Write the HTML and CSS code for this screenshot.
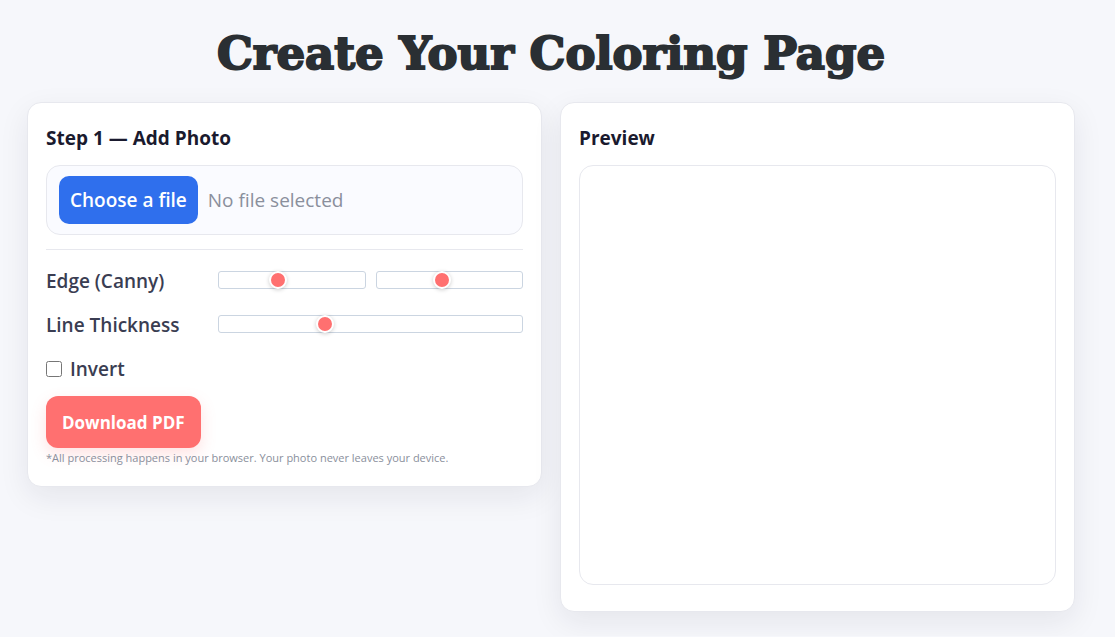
FILE: index.html
```html
<!DOCTYPE html>
<html lang="en">
<head>
  <meta charset="UTF-8" />
  <meta name="viewport" content="width=device-width, initial-scale=1.0"/>
  <title>Create Your Coloring Page</title>
  <link rel="stylesheet" href="styles.css">
</head>
<body>

<main class="page">
  <h1 class="page-title">Create Your Coloring Page</h1>

  <div class="grid">
    <section class="card">
      <h2 class="card-title">Step 1 — Add Photo</h2>

      <div class="file-row">
        <input type="file" id="fileInput" accept="image/*" aria-label="Choose a file" hidden />
        <button type="button" class="btn-file" id="fileBtn">Choose a file</button>
        <span class="file-name" id="fileName">No file selected</span>
      </div>

      <hr class="divider">

      <div class="control">
        <label for="cannyLow">Edge (Canny)</label>
        <div class="sliders">
          <input type="range" id="cannyLow" min="0" max="255" value="100" />
          <input type="range" id="cannyHigh" min="0" max="450" value="200" aria-label="Edge high threshold" />
        </div>
      </div>

      <div class="control">
        <label for="thickness">Line Thickness</label>
        <div class="sliders">
          <input type="range" id="thickness" min="0" max="100" value="34" />
        </div>
      </div>

      <label class="check" for="invert">
        <input type="checkbox" id="invert" />
        Invert
      </label>

      <button type="button" class="btn-download">Download PDF</button>
      <p class="note">*All processing happens in your browser. Your photo never leaves your device.</p>
    </section>

    <section class="card">
      <h2 class="card-title">Preview</h2>
      <div class="preview" id="preview"></div>
    </section>
  </div>
</main>

<script>
  const fileInput = document.getElementById('fileInput');
  const fileName = document.getElementById('fileName');

  document.getElementById('fileBtn').addEventListener('click', () => fileInput.click());

  fileInput.addEventListener('change', () => {
    const file = fileInput.files[0];
    fileName.textContent = file ? file.name : 'No file selected';
  });
</script>

</body>
</html>
```
FILE: styles.css
```css
* {
  box-sizing: border-box;
}

body {
  margin: 0;
  background: #f6f7fb;
  color: #1a1a2e;
  font-family: "Segoe UI", "Open Sans", "Noto Sans", sans-serif;
  font-size: 19px;
  line-height: 28px;
}

.page {
  padding: 24px 40px 24px 27px;
}

.page-title {
  margin: 0 0 18px;
  color: #2a2f33;
  font-family: "DejaVu Serif", serif;
  font-size: 45px;
  font-weight: 900;
  line-height: 60px;
  text-align: center;
  -webkit-text-stroke: 2px #2a2f33;
}

.grid {
  display: grid;
  grid-template-columns: 1fr 1fr;
  gap: 18px;
  align-items: start;
}

.card {
  background: #fff;
  border: 1px solid #e7e8ee;
  border-radius: 14px;
  padding: 18px;
  box-shadow: 0 10px 30px rgba(20, 20, 50, 0.08);
}

.card-title {
  margin: 3px 0 13px;
  font-size: 19px;
  font-weight: 700;
  line-height: 28px;
}

.file-row {
  display: flex;
  align-items: center;
  gap: 10px;
  height: 70px;
  padding: 0 12px;
  background: #fafbff;
  border: 1px solid #e7e8ee;
  border-radius: 14px;
}

.btn-file {
  height: 48px;
  padding: 0 11px;
  background: #2f6fed;
  border: none;
  border-radius: 10px;
  color: #fff;
  font-family: inherit;
  font-size: 19px;
  font-weight: 600;
  cursor: pointer;
}

.file-name {
  color: #8a8f9c;
}

.divider {
  margin: 14px 0 17px;
  border: none;
  border-top: 1px solid #e7e8ee;
}

.control {
  display: grid;
  grid-template-columns: 160px 1fr;
  gap: 12px;
  align-items: center;
  height: 28px;
  margin-bottom: 16px;
  color: #3a3d52;
  font-weight: 600;
}

.sliders {
  display: flex;
  gap: 10px;
  padding-bottom: 2px;
}

input[type="range"] {
  -webkit-appearance: none;
  appearance: none;
  flex: 1;
  min-width: 0;
  height: 18px;
  margin: 0;
  background: #fff;
  border: 1px solid #cbd5e1;
  border-radius: 3px;
}

input[type="range"]::-webkit-slider-thumb {
  -webkit-appearance: none;
  width: 18px;
  height: 18px;
  background: #ff7070;
  border: 2px solid #fff;
  border-radius: 50%;
  box-shadow: 0 1px 4px rgba(0, 0, 0, 0.2);
}

.check {
  display: flex;
  align-items: center;
  gap: 8px;
  margin-bottom: 13px;
  color: #3a3d52;
  font-weight: 600;
}

.check input {
  width: 16px;
  height: 16px;
  margin: 0;
}

.btn-download {
  display: block;
  height: 52px;
  padding: 0 16px;
  background: #ff7070;
  border: none;
  border-radius: 12px;
  color: #fff;
  font-family: inherit;
  font-size: 17px;
  font-weight: 700;
  box-shadow: 0 6px 16px rgba(255, 112, 112, 0.2);
  cursor: pointer;
}

.note {
  margin: 0;
  color: #8a8f9c;
  font-size: 11px;
  line-height: 20px;
}

.preview {
  height: 420px;
  margin-bottom: 8px;
  background: #fff;
  border: 1px solid #e7e8ee;
  border-radius: 14px;
}
```
